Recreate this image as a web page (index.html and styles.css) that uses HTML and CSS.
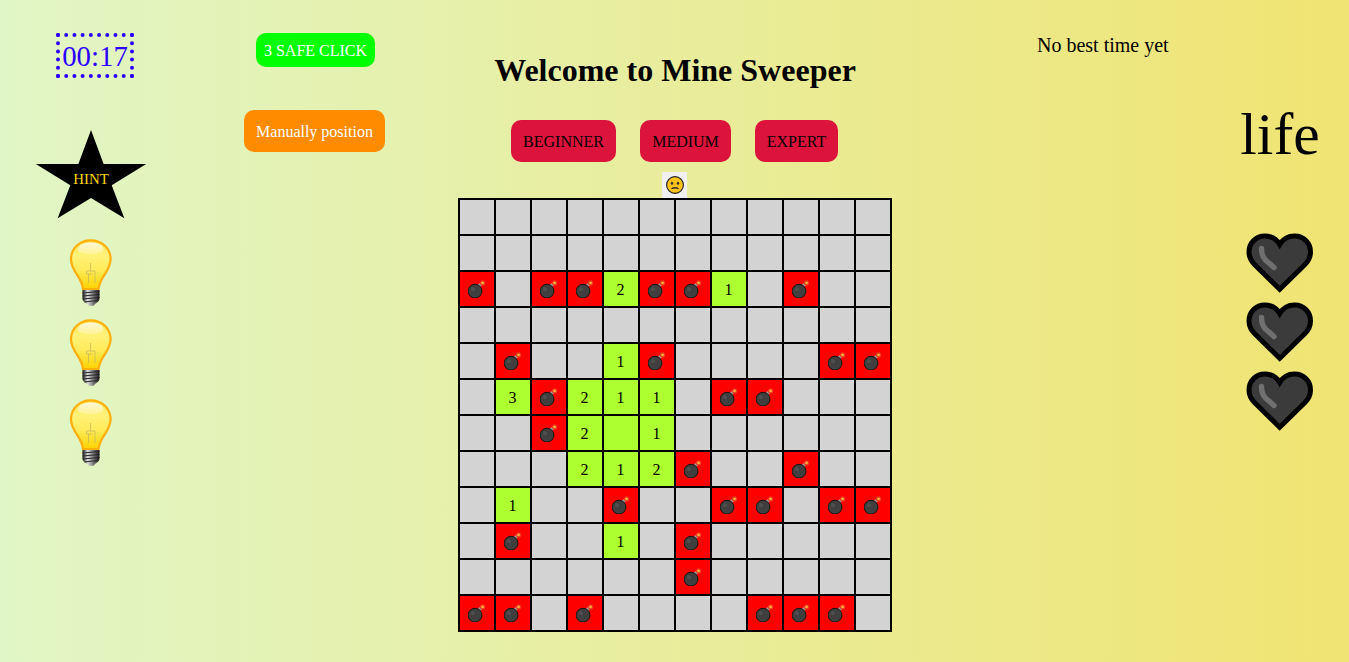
FILE: index.html
```html
<!DOCTYPE html>
<html lang="en">
<head>
<meta charset="utf-8">
<title>Mine Sweeper</title>
<link rel="stylesheet" href="styles.css">
</head>
<body>
<svg class="defs" width="0" height="0" aria-hidden="true">
  <defs>
    <linearGradient id="glass" x1="0" y1="0" x2="0" y2="1">
      <stop offset="0" stop-color="#ffe04a"/>
      <stop offset="0.3" stop-color="#fff27a"/>
      <stop offset="0.6" stop-color="#ffec5c"/>
      <stop offset="1" stop-color="#ffd200"/>
    </linearGradient>
    <linearGradient id="shine" x1="0" y1="0" x2="0" y2="1">
      <stop offset="0" stop-color="#fff" stop-opacity="0.8"/>
      <stop offset="1" stop-color="#fff" stop-opacity="0.25"/>
    </linearGradient>
    <linearGradient id="metal" x1="0" y1="0" x2="1" y2="0">
      <stop offset="0" stop-color="#151515"/>
      <stop offset="0.3" stop-color="#dcdcdc"/>
      <stop offset="0.6" stop-color="#808080"/>
      <stop offset="1" stop-color="#151515"/>
    </linearGradient>
    <symbol id="bomb" viewBox="0 0 18 18">
      <path d="M10.2 6.8 L13.6 3.4" stroke="#9a9a9a" stroke-width="3" fill="none"/>
      <circle cx="7" cy="11.2" r="6.9" fill="#3f3f3f" stroke="#141414" stroke-width="1"/>
      <circle cx="5" cy="9.2" r="2" fill="#505050"/>
      <circle cx="14.6" cy="2.9" r="2" fill="#ffb03a" stroke="#ee3a22" stroke-width="1.2"/>
    </symbol>
    <symbol id="bulb" viewBox="0 0 44 68">
      <path d="M21.8 2.3C10.5 2.3 2 10.5 2 21C2 28 5.5 33 8.5 37.5C11 41.5 13.5 46 14 51L29.5 51C30 46 32.5 41.5 35 37.5C38 33 41.6 28 41.6 21C41.6 10.5 33 2.3 21.8 2.3Z" fill="url(#glass)" stroke="#ffae0a" stroke-width="2.2"/>
      <path d="M21.8 4.5C14.5 4.5 9 7.5 9 11.5C9 14.5 14.5 16 21.8 16C29 16 34.6 14.5 34.6 11.5C34.6 7.5 29 4.5 21.8 4.5Z" fill="url(#shine)"/>
      <path d="M21.5 25V33M17.5 33H26V45M17.5 33V36H24M19.5 36V45" stroke="#b3a960" stroke-width="0.6" fill="none"/>
      <path d="M13.5 52H30.5V60.5C30.5 63 28 64.8 26.5 65.6L24.5 67.8H19.5L17.5 65.6C16 64.8 13.5 63 13.5 60.5Z" fill="url(#metal)"/>
      <path d="M13.5 55L30.5 53.5M13.5 58L30.5 56.5M13.5 61L30.5 59.5M15.5 64L28.5 62.5" stroke="#262626" stroke-width="1" fill="none"/>
    </symbol>
    <symbol id="heart" viewBox="0 0 68 60">
      <path d="M33.7 11.5C30.5 6 25 3 18.8 3C10 3 3 10 3 19C3 24 5 28 8.5 31.5L33.7 56.2L59 31.5C62.5 28 64.5 24 64.5 19C64.5 10 57.5 3 48.6 3C42.5 3 37 6 33.7 11.5Z" fill="#3b3b3b" stroke="#000" stroke-width="5" stroke-linejoin="miter"/>
      <path d="M15.5 15.5C15.5 21 16.5 24 19.5 27L28 34.5" fill="none" stroke="#707070" stroke-width="5.4" stroke-linecap="round"/>
    </symbol>
  </defs>
</svg>

<div class="page">
  <aside class="col-hints">
    <div class="timer">00:17</div>
    <div class="star">HINT</div>
    <div class="bulbs">
      <svg class="bulb"><use href="#bulb"/></svg>
      <svg class="bulb"><use href="#bulb"/></svg>
      <svg class="bulb"><use href="#bulb"/></svg>
    </div>
  </aside>

  <section class="col-actions">
    <button class="btn btn-safe">3 SAFE CLICK</button>
    <button class="btn btn-manual">Manually position</button>
  </section>

  <main class="col-game">
    <h1 class="title">Welcome to Mine Sweeper</h1>
    <div class="levels">
      <button class="btn btn-level btn-beginner">BEGINNER</button>
      <button class="btn btn-level btn-medium">MEDIUM</button>
      <button class="btn btn-level btn-expert">EXPERT</button>
    </div>
    <button class="smiley">
      <svg class="face" viewBox="0 0 18 18">
        <circle cx="9" cy="9" r="8.4" fill="#fcc21b" stroke="#1c1c2a" stroke-width="1.1"/>
        <ellipse cx="6" cy="7.2" rx="1.2" ry="1.5" fill="#2f2f2f"/>
        <ellipse cx="12" cy="7.2" rx="1.2" ry="1.5" fill="#2f2f2f"/>
        <path d="M5.5 12.8C7.5 11.6 10.5 11.6 12.5 12.8" fill="none" stroke="#2f2f2f" stroke-width="1.3"/>
      </svg>
    </button>
    <div class="board">
      <div></div><div></div><div></div><div></div><div></div><div></div><div></div><div></div><div></div><div></div><div></div><div></div>
      <div></div><div></div><div></div><div></div><div></div><div></div><div></div><div></div><div></div><div></div><div></div><div></div>
      <div class="mine"><svg><use href="#bomb"/></svg></div><div></div><div class="mine"><svg><use href="#bomb"/></svg></div><div class="mine"><svg><use href="#bomb"/></svg></div><div class="open">2</div><div class="mine"><svg><use href="#bomb"/></svg></div><div class="mine"><svg><use href="#bomb"/></svg></div><div class="open">1</div><div></div><div class="mine"><svg><use href="#bomb"/></svg></div><div></div><div></div>
      <div></div><div></div><div></div><div></div><div></div><div></div><div></div><div></div><div></div><div></div><div></div><div></div>
      <div></div><div class="mine"><svg><use href="#bomb"/></svg></div><div></div><div></div><div class="open">1</div><div class="mine"><svg><use href="#bomb"/></svg></div><div></div><div></div><div></div><div></div><div class="mine"><svg><use href="#bomb"/></svg></div><div class="mine"><svg><use href="#bomb"/></svg></div>
      <div></div><div class="open">3</div><div class="mine"><svg><use href="#bomb"/></svg></div><div class="open">2</div><div class="open">1</div><div class="open">1</div><div></div><div class="mine"><svg><use href="#bomb"/></svg></div><div class="mine"><svg><use href="#bomb"/></svg></div><div></div><div></div><div></div>
      <div></div><div></div><div class="mine"><svg><use href="#bomb"/></svg></div><div class="open">2</div><div class="open"></div><div class="open">1</div><div></div><div></div><div></div><div></div><div></div><div></div>
      <div></div><div></div><div></div><div class="open">2</div><div class="open">1</div><div class="open">2</div><div class="mine"><svg><use href="#bomb"/></svg></div><div></div><div></div><div class="mine"><svg><use href="#bomb"/></svg></div><div></div><div></div>
      <div></div><div class="open">1</div><div></div><div></div><div class="mine"><svg><use href="#bomb"/></svg></div><div></div><div></div><div class="mine"><svg><use href="#bomb"/></svg></div><div class="mine"><svg><use href="#bomb"/></svg></div><div></div><div class="mine"><svg><use href="#bomb"/></svg></div><div class="mine"><svg><use href="#bomb"/></svg></div>
      <div></div><div class="mine"><svg><use href="#bomb"/></svg></div><div></div><div></div><div class="open">1</div><div></div><div class="mine"><svg><use href="#bomb"/></svg></div><div></div><div></div><div></div><div></div><div></div>
      <div></div><div></div><div></div><div></div><div></div><div></div><div class="mine"><svg><use href="#bomb"/></svg></div><div></div><div></div><div></div><div></div><div></div>
      <div class="mine"><svg><use href="#bomb"/></svg></div><div class="mine"><svg><use href="#bomb"/></svg></div><div></div><div class="mine"><svg><use href="#bomb"/></svg></div><div></div><div></div><div></div><div></div><div class="mine"><svg><use href="#bomb"/></svg></div><div class="mine"><svg><use href="#bomb"/></svg></div><div class="mine"><svg><use href="#bomb"/></svg></div><div></div>
    </div>
  </main>

  <section class="col-best">
    <p class="best">No best time yet</p>
  </section>

  <aside class="col-life">
    <div class="life">life</div>
    <div class="hearts">
      <svg class="heart"><use href="#heart"/></svg>
      <svg class="heart"><use href="#heart"/></svg>
      <svg class="heart"><use href="#heart"/></svg>
    </div>
  </aside>
</div>
</body>
</html>
```

FILE: styles.css
```css
* {
  box-sizing: border-box;
}

html,
body {
  margin: 0;
  height: 100%;
}

body {
  font-family: "Liberation Serif", "Times New Roman", serif;
  font-size: 16px;
  color: #000;
  background: linear-gradient(to right, #e1f6c6, #f0e472);
  overflow: hidden;
}

.defs {
  display: block;
  height: 0;
}

.page {
  display: flex;
  height: 662px;
}

/* left column */
.col-hints {
  width: 182px;
  padding-top: 33px;
  display: flex;
  flex-direction: column;
  align-items: center;
}

.timer {
  border: 4px dotted #2a00ff;
  color: #2a00ff;
  font-size: 28.8px;
  line-height: 39px;
  width: 78px;
  height: 45px;
  margin-left: 8px;
  text-align: center;
}

.star {
  margin-top: 52px;
  width: 115px;
  height: 97px;
  flex: none;
  padding-top: 2px;
  display: flex;
  align-items: center;
  justify-content: center;
  background: #000;
  color: #ffd700;
  font-size: 14.8px;
  clip-path: polygon(50% 0%, 61% 35%, 98% 35%, 68% 57%, 79% 91%, 50% 70%, 21% 91%, 32% 57%, 2% 35%, 39% 35%);
}

.bulbs {
  margin-top: 11px;
  display: flex;
  flex-direction: column;
  gap: 12px;
}

.bulb {
  display: block;
  width: 44px;
  height: 68px;
}

/* buttons */
.btn {
  display: block;
  font: inherit;
  line-height: 18px;
  border: 0;
  border-radius: 10px;
  padding: 13px 0 11px;
  text-align: center;
  white-space: nowrap;
}

.col-actions {
  width: 266px;
  padding: 33px 0 0 62px;
  display: flex;
  flex-direction: column;
  align-items: flex-start;
  gap: 43px;
}

.btn-safe {
  width: 119px;
  margin-left: 12px;
  background: #00ff00;
  color: #fff;
  padding: 9px 0 7px;
}

.btn-manual {
  width: 141px;
  background: #ff8c00;
  color: #fff;
}

/* centre */
.col-game {
  width: 454px;
  display: flex;
  flex-direction: column;
  align-items: center;
}

.title {
  margin: 52px 0 31px;
  font-size: 32px;
  line-height: 37px;
  font-weight: bold;
}

.levels {
  align-self: flex-start;
  margin-left: 63px;
  display: flex;
  gap: 24px;
}

.btn-level {
  background: #dc143c;
  color: #000;
}

.btn-beginner {
  width: 105px;
}

.btn-medium {
  width: 91px;
}

.btn-expert {
  width: 83px;
}

.smiley {
  align-self: flex-start;
  margin: 10px 0 0 214px;
  width: 25px;
  height: 26px;
  padding: 0 0 0 4px;
  border: 0;
  background: #f0f0f0;
  display: flex;
  align-items: center;
  justify-content: flex-start;
}

.face {
  display: block;
  width: 18px;
  height: 18px;
}

.board {
  display: grid;
  grid-template-columns: repeat(12, 34px);
  grid-auto-rows: 34px;
  gap: 2px;
  padding: 2px;
  background: #000;
}

.board > div {
  background: #d3d3d3;
  display: flex;
  align-items: center;
  justify-content: center;
}

.board > .mine {
  background: #ff0000;
}

.board > .open {
  background: #adff2f;
  padding: 2px 1px 0 0;
}

.mine svg {
  display: block;
  width: 18px;
  height: 18px;
}

/* right columns */
.col-best {
  width: 309px;
  padding: 34px 0 0 135px;
}

.best {
  margin: 0;
  font-size: 20px;
  line-height: 23px;
  white-space: nowrap;
}

.col-life {
  width: 138px;
  padding-top: 100px;
  display: flex;
  flex-direction: column;
  align-items: center;
}

.life {
  font-size: 59.6px;
  line-height: 69px;
}

.hearts {
  margin-top: 64px;
  display: flex;
  flex-direction: column;
  gap: 9px;
}

.heart {
  display: block;
  width: 68px;
  height: 60px;
}
```
